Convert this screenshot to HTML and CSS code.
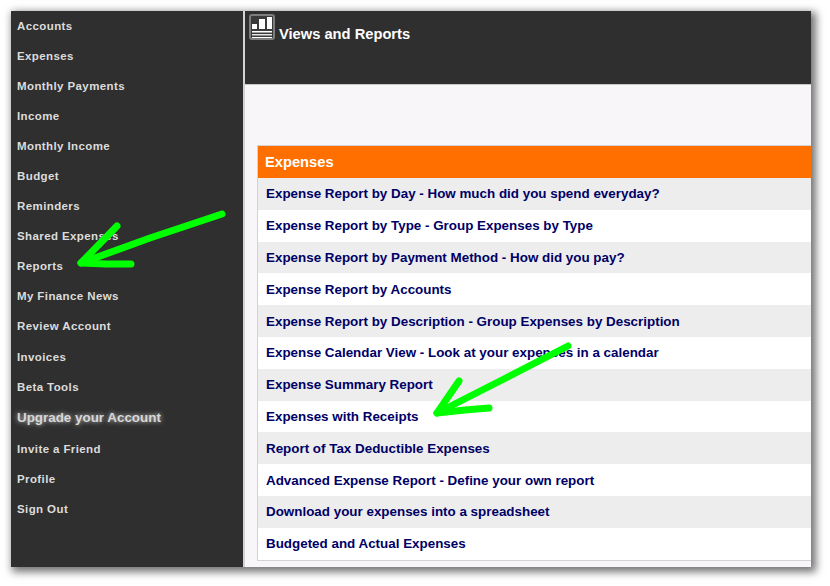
FILE: index.html
```html
<!DOCTYPE html>
<html lang="en">
<head>
<meta charset="utf-8">
<title>Views and Reports</title>
<link rel="stylesheet" href="styles.css">
</head>
<body>
<div class="frame">
  <nav class="sidebar">
    <a class="nav-item">Accounts</a>
    <a class="nav-item">Expenses</a>
    <a class="nav-item">Monthly Payments</a>
    <a class="nav-item">Income</a>
    <a class="nav-item">Monthly Income</a>
    <a class="nav-item">Budget</a>
    <a class="nav-item">Reminders</a>
    <a class="nav-item">Shared Expenses</a>
    <a class="nav-item">Reports</a>
    <a class="nav-item">My Finance News</a>
    <a class="nav-item">Review Account</a>
    <a class="nav-item">Invoices</a>
    <a class="nav-item">Beta Tools</a>
    <a class="nav-item upgrade">Upgrade your Account</a>
    <a class="nav-item">Invite a Friend</a>
    <a class="nav-item">Profile</a>
    <a class="nav-item">Sign Out</a>
  </nav>
  <main class="main">
    <header class="header">
      <svg class="header-icon" width="26" height="26" viewBox="0 0 26 26">
        <rect x="1" y="1" width="24" height="24" rx="2" fill="#3a3a3a" stroke="#7d7d7d" stroke-width="2"/>
        <rect x="3" y="10" width="5" height="5" fill="#fff"/>
        <rect x="10" y="5" width="6" height="10" fill="#fff"/>
        <rect x="18" y="3" width="5" height="12" fill="#fff"/>
        <rect x="3" y="17" width="20" height="1.5" fill="#fff"/>
        <rect x="3" y="20" width="20" height="1.5" fill="#e4e4e4"/>
        <rect x="3" y="23" width="20" height="1" fill="#fff"/>
      </svg>
      <h1 class="title">Views and Reports</h1>
    </header>
    <section class="content">
      <div class="panel">
        <h2 class="panel-title">Expenses</h2>
        <a class="row">Expense Report by Day - How much did you spend everyday?</a>
        <a class="row">Expense Report by Type - Group Expenses by Type</a>
        <a class="row">Expense Report by Payment Method - How did you pay?</a>
        <a class="row">Expense Report by Accounts</a>
        <a class="row">Expense Report by Description - Group Expenses by Description</a>
        <a class="row">Expense Calendar View - Look at your expenses in a calendar</a>
        <a class="row">Expense Summary Report</a>
        <a class="row">Expenses with Receipts</a>
        <a class="row">Report of Tax Deductible Expenses</a>
        <a class="row">Advanced Expense Report - Define your own report</a>
        <a class="row">Download your expenses into a spreadsheet</a>
        <a class="row">Budgeted and Actual Expenses</a>
      </div>
    </section>
  </main>
  <svg class="arrows" width="830" height="586" viewBox="0 0 830 586">
    <g fill="none" stroke="#00ff00" stroke-width="7" stroke-linecap="round" stroke-linejoin="round">
      <path d="M222 214 L150 238 L81 263"/>
      <path d="M117 226 L81 263 L106 264 L131 264"/>
      <path d="M568 346 L500 381 L437 413"/>
      <path d="M459 381 L437 413 L465 410 L489 408"/>
    </g>
  </svg>
</div>
</body>
</html>
```
FILE: styles.css
```css
* { box-sizing: border-box; }
html, body { margin: 0; padding: 0; background: #fff; }
body { width: 830px; height: 586px; overflow: hidden; font-family: "Liberation Sans", Arial, sans-serif; }
.frame {
  margin: 11px 0 0 11px;
  width: 800px;
  height: 556px;
  display: flex;
  background: #f8f6f8;
  box-shadow: 3px 3px 8px 2px rgba(0, 0, 0, 0.55);
}
.sidebar {
  width: 232px;
  flex: none;
  background: #2f2f2f;
  display: flex;
  flex-direction: column;
}
.nav-item {
  height: 30.1px;
  padding: 0 0 1px 6px;
  display: flex;
  align-items: center;
  font-size: 11.5px;
  font-weight: bold;
  letter-spacing: 0.4px;
  color: #dcdcdc;
  white-space: nowrap;
}
.upgrade {
  height: 32px;
  padding-bottom: 2px;
  font-size: 13.4px;
  letter-spacing: 0;
  color: #d8d8d8;
  text-shadow: 0 0 5px rgba(255, 255, 255, 0.75);
}
.main {
  flex: 1;
  min-width: 0;
  display: flex;
  flex-direction: column;
  border-left: 2px solid #d4d2d4;
}
.header {
  height: 74px;
  flex: none;
  background: #2f2f2f;
  border-bottom: 1px solid #c8c8c8;
  padding: 3px 0 0 4px;
  display: flex;
  align-items: flex-start;
}
.header-icon { flex: none; }
.title {
  margin: 10px 0 0 4px;
  font-size: 14.7px;
  line-height: 20px;
  font-weight: bold;
  color: #fff;
}
.content { flex: 1; padding: 60px 0 0 12px; }
.panel {
  border: 1px solid #d4d2d4;
  border-right: 0;
  background: #fff;
}
.panel-title {
  margin: 0;
  height: 32px;
  background: #ff6f00;
  padding-left: 7px;
  font-size: 14.7px;
  line-height: 32px;
  font-weight: bold;
  color: #fff;
}
.row {
  display: flex;
  align-items: center;
  height: 31.8px;
  padding-left: 8px;
  font-size: 13.4px;
  font-weight: bold;
  color: #000066;
  white-space: nowrap;
}
.row:nth-of-type(odd) { background: #ededed; }
.arrows { position: absolute; left: 0; top: 0; pointer-events: none; }
```
